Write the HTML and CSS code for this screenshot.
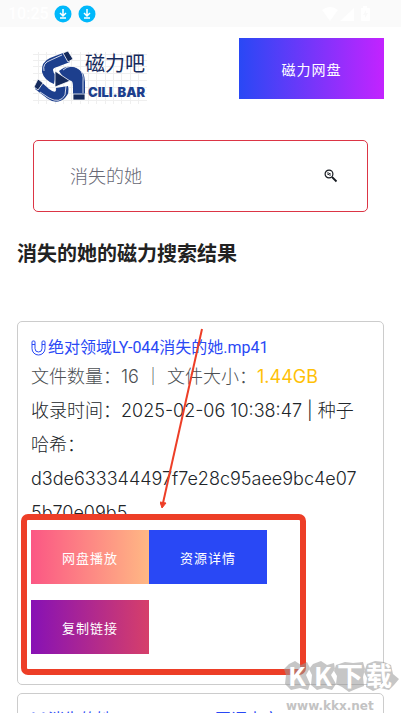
FILE: index.html
```html
<!DOCTYPE html>
<html lang="zh-CN">
<head>
    <meta charset="UTF-8">
    <meta name="viewport" content="width=device-width, initial-scale=1.0">
    <title>消失的她 - 磁力吧</title>
    <link rel="stylesheet" href="styles.css">
</head>
<body>
    <svg class="defs" width="0" height="0" aria-hidden="true">
        <symbol id="download" viewBox="0 0 18 18">
            <circle cx="9" cy="9" r="8.5" fill="#00b8fb"/>
            <path d="M9 4v6M6 8l3 3 3-3M6 13h6" fill="none" stroke="#fff" stroke-width="1.5"/>
        </symbol>
        <symbol id="magnet" viewBox="0 0 15 16">
            <path d="M1 2q0-1 1-1h1q1 0 1 1v6.500a3.500 3.500 0 0 0 7 0V2q0-1 1-1h1q1 0 1 1v6.500a6.500 6.500 0 0 1-13 0zM1 4.500h3M11 4.500h3" fill="none" stroke="currentColor"/>
        </symbol>
    </svg>

    <div class="status-bar">
        <span class="time">10:25</span>
        <svg class="download" width="18" height="18"><use href="#download"/></svg>
        <svg class="download" width="18" height="18"><use href="#download"/></svg>
        <svg class="signal" width="50" height="16" viewBox="0 0 50 16" fill="#fff">
            <path d="M1 4q8-6 16 0L9 15zM19 15L33 2v13zM40 2h2V0h4v2h2q1 0 1 1v11q0 1-1 1h-7q-1 0-1-1z"/>
            <path d="M45 4l-3 5h2v3l3-5h-2z" fill="#fafafa"/>
        </svg>
    </div>

    <header class="header">
        <a class="logo" href="#" aria-label="磁力吧 CILI.BAR">
            <svg width="114" height="54" viewBox="0 0 114 54">
                <path d="M0 3.500h114M0 9.500h114M0 15.500h114M0 22.500h114M0 29.500h114M0 36.500h114M0 42.500h114M0 49.500h114M5.500 1v52M13.500 1v52M22.500 1v52M30.500 1v52M38.500 1v52M47.500 1v52M55.500 1v52M63.500 1v52M72.500 1v52M80.500 1v52M88.500 1v52M97.500 1v52M105.500 1v52" stroke="#efefef" fill="none"/>
                <g fill="#1d3f8d">
                    <path d="M30 2L17 7Q8 11 9 21Q11 29 21 33L23 24Q20 22 20 19Q20 17 24 16L37 11z"/>
                    <path d="M6 29L2 38L15 48Q24 54 32 47Q37 42 35 35L23 37Q24 44 16 38z"/>
                    <path d="M26 20Q35 13 44 17Q52 21 52 31V49H40V36Q40 28 36 30L30 26z"/>
                </g>
                <path d="M30 2L35 0L40 8L35 11zM5 28L10 32L5 39L1 36zM40 43h12v6H40zM22 20L37 30L22 36z" fill="#152a5c" stroke="#fff" stroke-width=".8"/>
                <path d="M11 20Q9 12 18 9L29 4M30 19Q38 12 46 18Q51 22 50 31V42M7 41L16 47Q27 53 32 44L33 35" fill="none" stroke="#fff" stroke-width=".8"/>
                <text class="logo-name" x="52" y="20">磁力吧</text>
                <text class="logo-domain" x="55" y="46">CILI.BAR</text>
            </svg>
        </a>
        <a class="btn btn-top" href="#">磁力网盘</a>
    </header>

    <main class="main">
        <form class="search">
            <input class="search-input" type="text" aria-label="搜索" placeholder="消失的她">
            <button class="search-button" type="button" aria-label="搜索">
                <svg width="14" height="14" viewBox="0 0 14 14" fill="none" stroke="#161a20">
                    <circle cx="5" cy="5" r="3.900" stroke-width="1.200"/>
                    <path d="M4 3v3l2-2v3" stroke-width=".9"/>
                    <path d="M8 8l4.500 4.500" stroke-width="1.800"/>
                </svg>
            </button>
        </form>

        <h1 class="title">消失的她的磁力搜索结果</h1>

        <article class="card">
            <a class="card-title" href="#"><svg class="magnet" width="15" height="16"><use href="#magnet"/></svg>绝对领域LY-044消失的她.mp41</a>
            <p class="meta">文件数量：16 ｜ 文件大小：<span class="size">1.44GB</span></p>
            <p class="info">收录时间：2025-02-06 10:38:47 | 种子哈希：d3de633344497f7e28c95aee9bc4e075b70e09b5</p>
            <div class="actions">
                <a class="btn btn-play" href="#">网盘播放</a>
                <a class="btn btn-detail" href="#">资源详情</a>
                <button class="btn btn-copy" type="button">复制链接</button>
                <div class="highlight">
                    <svg class="arrow" width="44" height="182" viewBox="0 0 44 182">
                        <path d="M42 1L3 175" stroke="#ed3e27" stroke-width="2"/>
                        <path d="M0 174l2 6 4-5z" fill="#ed3e27" stroke="#ed3e27"/>
                    </svg>
                </div>
            </div>
        </article>

        <article class="card">
            <a class="card-title" href="#"><svg class="magnet" width="15" height="16"><use href="#magnet"/></svg>消失的她.2023.TC720P.国语中字</a>
        </article>
    </main>

    <div class="watermark">
        <svg width="120" height="56" viewBox="0 0 120 56">
            <g fill="#999" opacity=".55">
                <path d="M8 4L14 1L20 5L26 2L29 8L25 15L29 24L27 30L19 28L10 30L4 24L5 15L3 9z"/>
                <path d="M32 4L40 1L46 5L53 3L54 9L50 15L55 24L51 30L43 28L36 30L30 25L31 15L28 9z"/>
                <path d="M55 5L64 2L72 3L82 2L84 9L82 17L83 26L75 29L68 32L61 27L55 24L56 16L53 11z"/>
                <path d="M86 4L94 1L103 2L110 5L112 14L118 19L113 25L108 30L99 28L92 31L85 27L86 18L83 12z"/>
            </g>
            <text class="mark-name" x="7 33 56 85" y="26">KK下载</text>
            <text class="mark-url" x="5" y="50">www.kkx.net</text>
        </svg>
    </div>
</body>
</html>
```
FILE: styles.css
```css
* {
    box-sizing: border-box;
}

body {
    margin: 0;
    height: 100vh;
    overflow: hidden;
    position: relative;
    background: #fff;
    color: #212529;
    font-family: Inter, "Noto Sans CJK SC", sans-serif;
    font-size: 18px;
    font-weight: 300;
}

a {
    text-decoration: none;
}

.defs {
    position: absolute;
}

.status-bar {
    display: flex;
    align-items: center;
    gap: 6px;
    height: 27px;
    padding: 0 30px 0 8px;
    background: #fafafa;
}

.time {
    width: 40px;
    color: #fff;
    font: 500 16px Roboto, sans-serif;
}

.signal {
    margin-left: auto;
}

.header {
    display: flex;
    justify-content: space-between;
    align-items: flex-start;
    padding: 11px 17px 0 33px;
}

.logo {
    margin-top: 13px;
}

.logo svg {
    display: block;
}

.logo-name {
    font-size: 20px;
    font-weight: 400;
    fill: #152a5c;
}

.logo-domain {
    font: 900 13px Inter, sans-serif;
    fill: #1d3f8d;
}

.btn {
    display: flex;
    justify-content: center;
    align-items: center;
    width: 118px;
    height: 54px;
    border: none;
    color: #fff;
    font-family: inherit;
    font-size: 13px;
    font-weight: 400;
    letter-spacing: 1px;
}

.btn-top {
    width: 145px;
    height: 61px;
    font-size: 14px;
    background: linear-gradient(to right, #2948f5, #c323ff);
}

.btn-play {
    background: linear-gradient(to right, #fb5784, #ffb884);
}

.btn-detail {
    background: #2948f5;
}

.btn-copy {
    background: linear-gradient(to right, #8711b5, #d63f6a);
}

.main {
    padding: 0 17px;
}

.search {
    display: flex;
    align-items: center;
    height: 72px;
    margin: 35px 16px 0;
    padding: 0 29px 0 36px;
    border: 1px solid #dc3545;
    border-radius: 5px;
}

.search-input {
    flex: 1;
    min-width: 0;
    padding: 0;
    border: none;
    outline: none;
    background: none;
    font-family: inherit;
    font-size: 18px;
    font-weight: 300;
}

.search-input::placeholder {
    color: #666774;
}

.search-button {
    display: flex;
    padding: 0;
    border: none;
    background: none;
}

.title {
    margin: 26px 0 50px;
    color: #222;
    font-size: 20px;
    font-weight: 700;
    line-height: 33px;
}

.card {
    margin-bottom: 8px;
    padding: 14px 13px 13px;
    border: 1px solid #ccc;
    border-radius: 5px;
}

.card-title {
    display: flex;
    align-items: center;
    gap: 2px;
    color: #2948f5;
    font-family: Roboto, "Noto Sans CJK SC", sans-serif;
    font-size: 16px;
    font-weight: 400;
    line-height: 24px;
    white-space: nowrap;
}

.meta {
    margin: 0;
    color: #4c4f53;
    font-size: 18px;
    line-height: 34px;
}

.size {
    color: #ffc107;
    font-weight: 400;
}

.info {
    margin: 0;
    padding-right: 8px;
    font-size: 18px;
    line-height: 34px;
    word-wrap: break-word;
}

.actions {
    position: relative;
    display: flex;
    flex-wrap: wrap;
    row-gap: 16px;
    padding-bottom: 17px;
}

.highlight {
    position: absolute;
    top: -16px;
    left: -10px;
    width: 285px;
    height: 161px;
    border: 6px solid #ed3e27;
    border-radius: 7px;
    pointer-events: none;
}

.arrow {
    position: absolute;
    left: 133px;
    bottom: 159px;
}

.watermark {
    position: absolute;
    right: 0;
    bottom: -3px;
    pointer-events: none;
}

.watermark svg {
    display: block;
}

.mark-name {
    font: 700 26px "Noto Sans CJK SC", sans-serif;
    fill: #fff;
}

.mark-url {
    font: 700 12px "DejaVu Sans", sans-serif;
    fill: #aaa;
    opacity: .7;
}
```
